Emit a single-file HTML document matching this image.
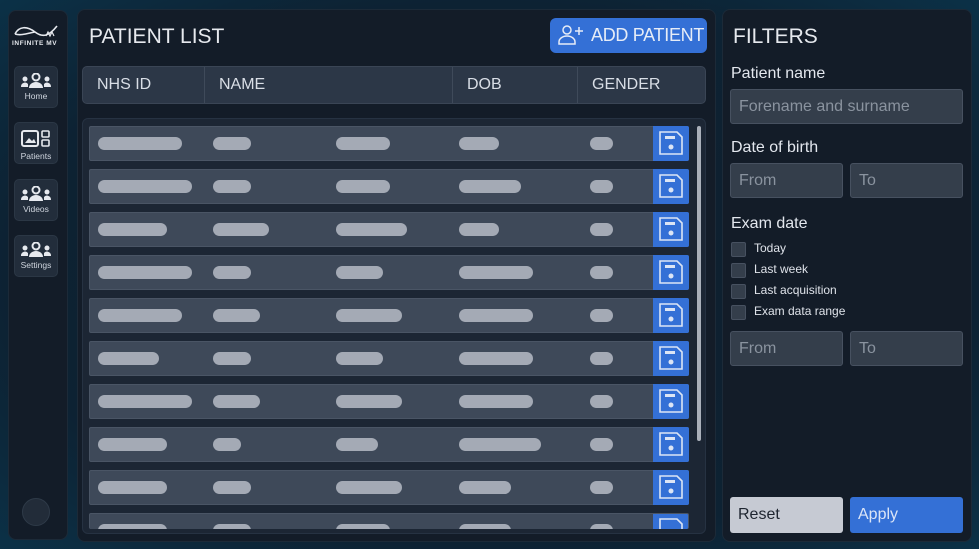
<!DOCTYPE html>
<html><head><meta charset="utf-8"><style>
*{box-sizing:border-box;margin:0;padding:0}
body{width:979px;height:549px;overflow:hidden;background:radial-gradient(ellipse at 50% 50%,#0f1e2c 0%,#0d2233 70%,#0b3147 100%);font-family:"Liberation Sans",sans-serif;color:#dfe3ea;position:relative;white-space:nowrap}
.abs{position:absolute}
.panel{background:#131c28;border-radius:8px;border:1px solid #1c2a38}
.nav{left:14px;width:44px;height:42px;background:#222d3b;border-radius:5px;border:1px solid #2b3745;text-align:center;font-size:8.5px;color:#cfd5de}
.nav svg{display:block;margin:6px auto 2px}
.hdr{left:82px;top:66px;width:624px;height:38px;background:#2c3747;border:1px solid #3a4555;border-radius:5px}
.hdr div{position:absolute;top:0;height:36px;line-height:36px;font-size:16px;color:#d9dee6;padding-left:14px}
.list{left:82px;top:118px;width:624px;height:416px;background:#1c2634;border:1px solid #263242;border-radius:6px;overflow:hidden}
.row{position:absolute;left:6px;width:600px;height:35px;background:#3e4959;border:1px solid #4a5565;border-radius:2px}
.pill{position:absolute;top:10px;height:13px;border-radius:7px;background:#a4aab5}
.save{position:absolute;right:-1px;top:-1px;width:36px;height:35px;background:#3470d6;border-radius:0 2px 2px 0}
.save svg{position:absolute;left:5px;top:4px}
.lbl{font-size:16px;color:#e3e7ee;left:731px}
.inp{background:#343e4b;border:1px solid #475160;border-radius:3px;color:#8a939f;font-size:16px;padding-left:8px;line-height:33px;height:35px}
.cb{left:731px;width:15px;height:15px;background:#343e4b;border:1px solid #475160;border-radius:2px}
.cbl{left:754px;font-size:12px;color:#dfe3ea}
</style></head><body>
<div class="abs panel" style="left:8px;top:10px;width:60px;height:530px"></div>
<svg class="abs" style="left:13px;top:24px" width="46" height="14" viewBox="0 0 46 14"><path d="M2 10 C6 2,14 2,22 8 S36 12,44 2 M2 10 C8 12,16 9,22 8" stroke="#e6e9ee" stroke-width="1.6" fill="none"/><path d="M33 12 l2-4 2 4 2-4 2 4" stroke="#e6e9ee" stroke-width="1.2" fill="none"/></svg>
<div class="abs" style="left:12px;top:40px;font-size:6.5px;letter-spacing:.6px;color:#e6e9ee;font-weight:bold">INFINITE MV</div>
<div class="abs nav" style="top:66px"><svg width="32" height="16" viewBox="0 0 32 16"><circle cx="16" cy="4" r="3.5" fill="none" stroke="#e6e9ee" stroke-width="2"/><path d="M9 15 a7 6 0 0 1 14 0z" fill="#e6e9ee"/><circle cx="5" cy="6" r="2.5" fill="#e6e9ee"/><circle cx="27" cy="6" r="2.5" fill="#e6e9ee"/><path d="M1 14 a4 4 0 0 1 7 -3v3z M31 14 a4 4 0 0 0 -7 -3v3z" fill="#e6e9ee"/></svg>Home</div>
<div class="abs nav" style="top:122px"><svg width="32" height="20" viewBox="0 0 32 20"><rect x="2" y="2" width="16" height="15" rx="2" fill="none" stroke="#e6e9ee" stroke-width="2"/><path d="M5 14 l4-5 3 3 2-2 2 4z" fill="#e6e9ee"/><rect x="22" y="2" width="7" height="6" rx="1" fill="none" stroke="#e6e9ee" stroke-width="1.6"/><rect x="22" y="11" width="7" height="6" rx="1" fill="none" stroke="#e6e9ee" stroke-width="1.6"/></svg>Patients</div>
<div class="abs nav" style="top:179px"><svg width="32" height="16" viewBox="0 0 32 16"><circle cx="16" cy="4" r="3.5" fill="none" stroke="#e6e9ee" stroke-width="2"/><path d="M9 15 a7 6 0 0 1 14 0z" fill="#e6e9ee"/><circle cx="5" cy="6" r="2.5" fill="#e6e9ee"/><circle cx="27" cy="6" r="2.5" fill="#e6e9ee"/><path d="M1 14 a4 4 0 0 1 7 -3v3z M31 14 a4 4 0 0 0 -7 -3v3z" fill="#e6e9ee"/></svg>Videos</div>
<div class="abs nav" style="top:235px"><svg width="32" height="16" viewBox="0 0 32 16"><circle cx="16" cy="4" r="3.5" fill="none" stroke="#e6e9ee" stroke-width="2"/><path d="M9 15 a7 6 0 0 1 14 0z" fill="#e6e9ee"/><circle cx="5" cy="6" r="2.5" fill="#e6e9ee"/><circle cx="27" cy="6" r="2.5" fill="#e6e9ee"/><path d="M1 14 a4 4 0 0 1 7 -3v3z M31 14 a4 4 0 0 0 -7 -3v3z" fill="#e6e9ee"/></svg>Settings</div>
<div class="abs" style="left:22px;top:498px;width:28px;height:28px;border-radius:50%;background:#222c39;border:1px solid #2e3a48"></div>

<div class="abs panel" style="left:77px;top:9px;width:639px;height:533px"></div>
<div class="abs" style="left:89px;top:25px;font-size:21px;color:#e6e9ee">PATIENT LIST</div>
<div class="abs" style="left:550px;top:18px;width:157px;height:35px;background:#3470d6;border-radius:6px;font-size:18px;letter-spacing:-0.3px;color:#e6ecf7;line-height:35px;padding-left:41px;overflow:hidden">ADD PATIENT</div>
<svg class="abs" style="left:557px;top:24px" width="28" height="22" viewBox="0 0 28 22"><circle cx="10" cy="6" r="4" fill="none" stroke="#e6ecf7" stroke-width="1.5"/><path d="M2 20 v-2 a8 6 0 0 1 16 0 v2z" fill="none" stroke="#e6ecf7" stroke-width="1.5"/><path d="M22 3v8M18 7h8" stroke="#e6ecf7" stroke-width="1.5"/></svg>
<div class="abs hdr"><div style="left:0;width:121px">NHS ID</div><div style="left:121px;width:248px;border-left:1px solid #3f4a5a">NAME</div><div style="left:369px;width:125px;border-left:1px solid #3f4a5a">DOB</div><div style="left:494px;border-left:1px solid #3f4a5a">GENDER</div></div>
<div class="abs list">
<div class="abs" style="left:614px;top:7px;width:4px;height:315px;background:#aab0ba;border-radius:2px"></div>
<div class="row" style="top:7px"><div class="pill" style="left:8px;width:84px"></div><div class="pill" style="left:123px;width:38px"></div><div class="pill" style="left:246px;width:54px"></div><div class="pill" style="left:369px;width:40px"></div><div class="pill" style="left:500px;width:23px"></div><div class="save"><svg width="26" height="26" viewBox="0 0 26 26"><path d="M2 2h17l5 5v17H2z" fill="none" stroke="#dce5f5" stroke-width="1.6"/><rect x="7" y="6" width="10" height="3" fill="#dce5f5"/><circle cx="13" cy="17" r="2.5" fill="#dce5f5"/></svg></div></div>
<div class="row" style="top:50px"><div class="pill" style="left:8px;width:94px"></div><div class="pill" style="left:123px;width:38px"></div><div class="pill" style="left:246px;width:54px"></div><div class="pill" style="left:369px;width:62px"></div><div class="pill" style="left:500px;width:23px"></div><div class="save"><svg width="26" height="26" viewBox="0 0 26 26"><path d="M2 2h17l5 5v17H2z" fill="none" stroke="#dce5f5" stroke-width="1.6"/><rect x="7" y="6" width="10" height="3" fill="#dce5f5"/><circle cx="13" cy="17" r="2.5" fill="#dce5f5"/></svg></div></div>
<div class="row" style="top:93px"><div class="pill" style="left:8px;width:69px"></div><div class="pill" style="left:123px;width:56px"></div><div class="pill" style="left:246px;width:71px"></div><div class="pill" style="left:369px;width:40px"></div><div class="pill" style="left:500px;width:23px"></div><div class="save"><svg width="26" height="26" viewBox="0 0 26 26"><path d="M2 2h17l5 5v17H2z" fill="none" stroke="#dce5f5" stroke-width="1.6"/><rect x="7" y="6" width="10" height="3" fill="#dce5f5"/><circle cx="13" cy="17" r="2.5" fill="#dce5f5"/></svg></div></div>
<div class="row" style="top:136px"><div class="pill" style="left:8px;width:94px"></div><div class="pill" style="left:123px;width:38px"></div><div class="pill" style="left:246px;width:47px"></div><div class="pill" style="left:369px;width:74px"></div><div class="pill" style="left:500px;width:23px"></div><div class="save"><svg width="26" height="26" viewBox="0 0 26 26"><path d="M2 2h17l5 5v17H2z" fill="none" stroke="#dce5f5" stroke-width="1.6"/><rect x="7" y="6" width="10" height="3" fill="#dce5f5"/><circle cx="13" cy="17" r="2.5" fill="#dce5f5"/></svg></div></div>
<div class="row" style="top:179px"><div class="pill" style="left:8px;width:84px"></div><div class="pill" style="left:123px;width:47px"></div><div class="pill" style="left:246px;width:66px"></div><div class="pill" style="left:369px;width:74px"></div><div class="pill" style="left:500px;width:23px"></div><div class="save"><svg width="26" height="26" viewBox="0 0 26 26"><path d="M2 2h17l5 5v17H2z" fill="none" stroke="#dce5f5" stroke-width="1.6"/><rect x="7" y="6" width="10" height="3" fill="#dce5f5"/><circle cx="13" cy="17" r="2.5" fill="#dce5f5"/></svg></div></div>
<div class="row" style="top:222px"><div class="pill" style="left:8px;width:61px"></div><div class="pill" style="left:123px;width:38px"></div><div class="pill" style="left:246px;width:47px"></div><div class="pill" style="left:369px;width:74px"></div><div class="pill" style="left:500px;width:23px"></div><div class="save"><svg width="26" height="26" viewBox="0 0 26 26"><path d="M2 2h17l5 5v17H2z" fill="none" stroke="#dce5f5" stroke-width="1.6"/><rect x="7" y="6" width="10" height="3" fill="#dce5f5"/><circle cx="13" cy="17" r="2.5" fill="#dce5f5"/></svg></div></div>
<div class="row" style="top:265px"><div class="pill" style="left:8px;width:94px"></div><div class="pill" style="left:123px;width:47px"></div><div class="pill" style="left:246px;width:66px"></div><div class="pill" style="left:369px;width:74px"></div><div class="pill" style="left:500px;width:23px"></div><div class="save"><svg width="26" height="26" viewBox="0 0 26 26"><path d="M2 2h17l5 5v17H2z" fill="none" stroke="#dce5f5" stroke-width="1.6"/><rect x="7" y="6" width="10" height="3" fill="#dce5f5"/><circle cx="13" cy="17" r="2.5" fill="#dce5f5"/></svg></div></div>
<div class="row" style="top:308px"><div class="pill" style="left:8px;width:69px"></div><div class="pill" style="left:123px;width:28px"></div><div class="pill" style="left:246px;width:42px"></div><div class="pill" style="left:369px;width:82px"></div><div class="pill" style="left:500px;width:23px"></div><div class="save"><svg width="26" height="26" viewBox="0 0 26 26"><path d="M2 2h17l5 5v17H2z" fill="none" stroke="#dce5f5" stroke-width="1.6"/><rect x="7" y="6" width="10" height="3" fill="#dce5f5"/><circle cx="13" cy="17" r="2.5" fill="#dce5f5"/></svg></div></div>
<div class="row" style="top:351px"><div class="pill" style="left:8px;width:69px"></div><div class="pill" style="left:123px;width:38px"></div><div class="pill" style="left:246px;width:66px"></div><div class="pill" style="left:369px;width:52px"></div><div class="pill" style="left:500px;width:23px"></div><div class="save"><svg width="26" height="26" viewBox="0 0 26 26"><path d="M2 2h17l5 5v17H2z" fill="none" stroke="#dce5f5" stroke-width="1.6"/><rect x="7" y="6" width="10" height="3" fill="#dce5f5"/><circle cx="13" cy="17" r="2.5" fill="#dce5f5"/></svg></div></div>
<div class="row" style="top:394px;height:16px;border-bottom:none;overflow:hidden"><div class="pill" style="left:8px;width:69px"></div><div class="pill" style="left:123px;width:38px"></div><div class="pill" style="left:246px;width:54px"></div><div class="pill" style="left:369px;width:52px"></div><div class="pill" style="left:500px;width:23px"></div><div class="save" style="height:17px"><svg width="26" height="26" viewBox="0 0 26 26"><path d="M2 2h17l5 5v17H2z" fill="none" stroke="#dce5f5" stroke-width="1.6"/></svg></div></div>
</div>

<div class="abs panel" style="left:722px;top:9px;width:250px;height:533px"></div>
<div class="abs" style="left:733px;top:25px;font-size:21px;color:#e6e9ee">FILTERS</div>
<div class="abs lbl" style="top:65px">Patient name</div>
<div class="abs inp" style="left:730px;top:89px;width:233px">Forename and surname</div>
<div class="abs lbl" style="top:139px">Date of birth</div>
<div class="abs inp" style="left:730px;top:163px;width:113px">From</div>
<div class="abs inp" style="left:850px;top:163px;width:113px">To</div>
<div class="abs lbl" style="top:215px">Exam date</div>
<div class="abs cb" style="top:242px"></div><div class="abs cbl" style="top:241px">Today</div>
<div class="abs cb" style="top:263px"></div><div class="abs cbl" style="top:262px">Last week</div>
<div class="abs cb" style="top:284px"></div><div class="abs cbl" style="top:283px">Last acquisition</div>
<div class="abs cb" style="top:305px"></div><div class="abs cbl" style="top:304px">Exam data range</div>
<div class="abs inp" style="left:730px;top:331px;width:113px">From</div>
<div class="abs inp" style="left:850px;top:331px;width:113px">To</div>
<div class="abs" style="left:730px;top:497px;width:113px;height:36px;background:#c6cad3;border-radius:3px;color:#1e2530;font-size:16px;line-height:36px;padding-left:8px">Reset</div>
<div class="abs" style="left:850px;top:497px;width:113px;height:36px;background:#3470d6;border-radius:3px;color:#dbe5f7;font-size:16px;line-height:36px;padding-left:8px">Apply</div>
</body></html>
